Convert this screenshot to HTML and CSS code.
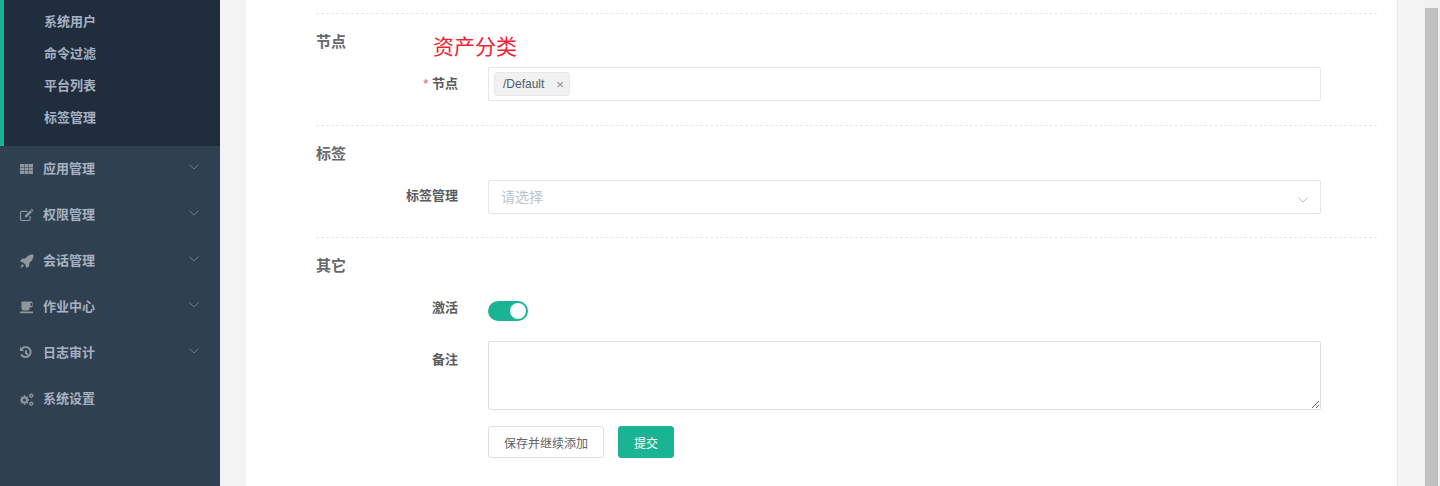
FILE: index.html
```html
<!DOCTYPE html>
<html lang="zh">
<head>
<meta charset="utf-8">
<title>资产</title>
<link rel="stylesheet" href="styles.css">
</head>
<body>
<div class="page">
  <aside class="sidebar">
    <ul class="submenu">
      <li>系统用户</li>
      <li>命令过滤</li>
      <li>平台列表</li>
      <li>标签管理</li>
    </ul>
    <ul class="menu">
      <li class="menu-item">
        <svg class="icon" viewBox="0 0 14 14"><path d="M0 2h4v3H0zM4.500 2h4v3h-4zM9 2h4v3H9zM0 5.500h4v3H0zM4.500 5.500h4v3h-4zM9 5.500h4v3H9zM0 9h4v3H0zM4.500 9h4v3h-4zM9 9h4v3H9z"/></svg>
        <span class="menu-text">应用管理</span>
        <svg class="chev" viewBox="0 0 10 6"><path d="M.3.5 5 5 9.700.5"/></svg>
      </li>
      <li class="menu-item">
        <svg class="icon" viewBox="0.500 0 14 14"><path class="line" d="M10.600 8v3.200a1.300 1.300 0 0 1-1.300 1.300H2.300A1.300 1.300 0 0 1 1 11.200V4.700a1.300 1.300 0 0 1 1.300-1.300H8"/><path d="M5.500 7.500 10.800 2.200l1.700 1.700L7.200 9.200H5.500zM11.300 1.700l.6-.6c.2-.2.5-.2.7 0l1 1c.2.2.2.5 0 .7l-.6.6z"/></svg>
        <span class="menu-text">权限管理</span>
        <svg class="chev" viewBox="0 0 10 6"><path d="M.3.5 5 5 9.700.5"/></svg>
      </li>
      <li class="menu-item">
        <svg class="icon" viewBox="1 0.500 13 13"><path d="M13.500 1c.2 3.300-.9 5.600-3.700 7.700l-.3 3.100L6.800 13.500l-.5-2.700-2.600-2.600-2.700-.5L2.700 5l3.100-.3C8 2 10.300.8 13.500 1zM2.900 9.800l1.800 1.800L1.200 13.400z"/></svg>
        <span class="menu-text">会话管理</span>
        <svg class="chev" viewBox="0 0 10 6"><path d="M.3.5 5 5 9.700.5"/></svg>
      </li>
      <li class="menu-item">
        <svg class="icon" viewBox="0 0 14 14"><path d="M1.500 1.500h9.500a1.500 1.500 0 0 1 1.500 1V3a2.500 2.500 0 0 1 .5 2.200 2.500 2.500 0 0 1-2.500 2.300h-1v1a2 2 0 0 1-2 2H3.500a2 2 0 0 1-2-2zM10.500 3v3h.8a1.200 1.200 0 0 0 1.200-1.200V4.200A1.200 1.200 0 0 0 11.300 3zM0 11.500h13v1.800H0z"/></svg>
        <span class="menu-text">作业中心</span>
        <svg class="chev" viewBox="0 0 10 6"><path d="M.3.5 5 5 9.700.5"/></svg>
      </li>
      <li class="menu-item">
        <svg class="icon" viewBox="0 0 14 14"><path class="line thick" d="M1.900 2.800A5 5 0 1 1 1.300 8.500"/><path d="M0 .8 4.200 5H0z"/><path class="line thick" d="M6 4.200V7.300l2 1.300"/></svg>
        <span class="menu-text">日志审计</span>
        <svg class="chev" viewBox="0 0 10 6"><path d="M.3.5 5 5 9.700.5"/></svg>
      </li>
      <li class="menu-item">
        <svg class="icon" viewBox="0 0 14 14"><circle class="line thick" cx="4.500" cy="8" r="2.600"/><path class="line tooth" d="M4.500 3.300v1.600M4.500 11.100v1.600M-.2 8h1.600M7.600 8h1.600M1.200 4.700l1.100 1.100M6.700 10.200l1.100 1.100M1.200 11.300l1.100-1.100M6.700 5.800l1.100-1.100"/><circle class="line thick-s" cx="11.200" cy="3.800" r="1.400"/><path class="line" d="M11.200 1.400v.8M11.200 5.400v.8M8.800 3.800h.8M12.800 3.800h.8"/><circle class="line thick-s" cx="11.200" cy="11.800" r="1.400"/><path class="line" d="M11.200 9.400v.8M11.200 13.400v.6M8.800 11.800h.8M12.800 11.800h.8"/></svg>
        <span class="menu-text">系统设置</span>
      </li>
    </ul>
  </aside>

  <main class="main">
    <form class="card">
      <section class="section">
        <h3 class="section-title">节点</h3>
        <div class="row">
          <label class="label"><span class="req">*</span> 节点</label>
          <div class="field tags">
            <span class="tag">/Default<span class="tag-x">×</span></span>
          </div>
        </div>
        <div class="annotation">资产分类</div>
      </section>

      <section class="section section-tight">
        <h3 class="section-title">标签</h3>
        <div class="row">
          <label class="label">标签管理</label>
          <div class="field select">
            <span class="placeholder">请选择</span>
            <svg class="select-arrow" viewBox="0 0 10 6"><path d="M.3.5 5 5 9.700.5"/></svg>
          </div>
        </div>
      </section>

      <section class="section section-last">
        <h3 class="section-title">其它</h3>
        <div class="row row-switch">
          <label class="label">激活</label>
          <div class="switch"><span class="knob"></span></div>
        </div>
        <div class="row row-note">
          <label class="label">备注</label>
          <textarea class="note"></textarea>
        </div>
        <div class="row">
          <span></span>
          <div class="actions">
            <button type="button" class="btn">保存并继续添加</button>
            <button type="button" class="btn btn-primary">提交</button>
          </div>
        </div>
      </section>
    </form>
  </main>

  <div class="scrollbar"><div class="thumb"></div></div>
</div>
</body>
</html>
```
FILE: styles.css
```css
* { box-sizing: border-box; }
html, body { margin: 0; padding: 0; height: 486px; overflow: hidden; }
body {
  font-family: "Liberation Sans", "Noto Sans CJK SC", sans-serif;
  font-size: 13px;
  color: #676a6c;
  background: #f3f3f4;
}
ul { list-style: none; margin: 0; padding: 0; }
.page { display: flex; height: 486px; }

.sidebar { width: 220px; flex: none; background: #2f4050; color: #a7b1c2; font-weight: 700; }
.submenu {
  height: 146px;
  padding-top: 6px;
  background: #1f2d3d;
  border-left: 4px solid #1ab394;
}
.submenu li { height: 32px; line-height: 32px; padding-left: 40px; }
.menu-item { display: flex; align-items: center; height: 46px; padding: 0 21px 0 20px; }
.icon { width: 14px; height: 14px; margin-right: 9px; flex: none; fill: #8f969e; }
.icon .line { fill: none; stroke: #8f969e; stroke-width: 1.100; }
.icon .thick { stroke-width: 2; }
.icon .tooth { stroke-width: 1.600; }
.icon .thick-s { stroke-width: 1.300; }
.menu-text { flex: 1; margin-bottom: 4px; }
.chev { width: 10px; height: 6px; margin-top: -4px; fill: none; stroke: #6d7c8a; stroke-width: 1; }

.main { flex: 1; min-width: 0; padding: 0 26px; }
.card {
  height: 486px;
  padding: 13px 20px 0 70px;
  background: #fff;
  border-right: 1px solid #e7eaec;
}
.section { position: relative; height: 112px; padding-top: 18px; border-top: 1px dashed #e7eaec; }
.section-last { height: auto; }
.section-title {
  margin: 0 0 15px;
  height: 20px;
  line-height: 20px;
  font-size: 15px;
  font-weight: 700;
  color: #676a6c;
}
.section-tight .section-title { margin-bottom: 16px; }
.row { display: grid; grid-template-columns: 142px 833px; column-gap: 30px; }
.label { padding-top: 7px; line-height: 20px; text-align: right; font-weight: 700; color: #595c5e; }
.section-tight .label { padding-top: 6px; }
.req { color: #ed5565; font-weight: 400; }
.field { height: 34px; border: 1px solid #e5e6e7; border-radius: 2px; background: #fff; }
.tags { padding: 4px 5px; }
.tag {
  display: inline-flex;
  align-items: center;
  height: 24px;
  padding: 0 5px 0 8px;
  background: #f1f1f1;
  border: 1px solid #e8e8e8;
  border-radius: 4px;
  font-size: 12px;
  color: #4f5b66;
}
.tag-x { margin-left: 12px; font-size: 13px; color: #8a9099; }
.select { display: flex; align-items: center; justify-content: space-between; padding: 0 12px 0 12px; }
.placeholder { font-size: 14px; color: #bcc3cf; margin-bottom: 2px; }
.select-arrow { width: 10px; height: 6px; margin-top: 6px; fill: none; stroke: #b4bccc; stroke-width: 1; }
.annotation {
  position: absolute;
  left: 117px;
  top: 18px;
  font-size: 21px;
  line-height: 30px;
  color: #ef2233;
}
.row-switch { height: 50px; }
.switch {
  position: relative;
  width: 40px;
  height: 20px;
  margin-top: 10px;
  border-radius: 10px;
  background: #1ab394;
}
.knob {
  position: absolute;
  right: 2px;
  top: 2px;
  width: 16px;
  height: 16px;
  border-radius: 50%;
  background: #fff;
}
.row-note { margin-bottom: 16px; }
.row-note .label { padding-top: 9px; }
.note {
  display: block;
  width: 833px;
  height: 69px;
  margin: 0;
  border: 1px solid #dcdfe6;
  border-radius: 2px;
  background: #fff;
}
.actions { display: flex; gap: 14px; }
.btn {
  height: 32px;
  padding: 0 15px;
  border: 1px solid #dcdfe6;
  border-radius: 3px;
  background: #fff;
  color: #606266;
  font: 12px "Liberation Sans", "Noto Sans CJK SC", sans-serif;
}
.btn-primary { background: #1ab394; border-color: #1ab394; color: #fff; }

.scrollbar { width: 16px; flex: none; padding: 8px 2px 0 1px; background: #f1f1f1; }
.thumb { height: 478px; background: #c1c1c1; }
```
